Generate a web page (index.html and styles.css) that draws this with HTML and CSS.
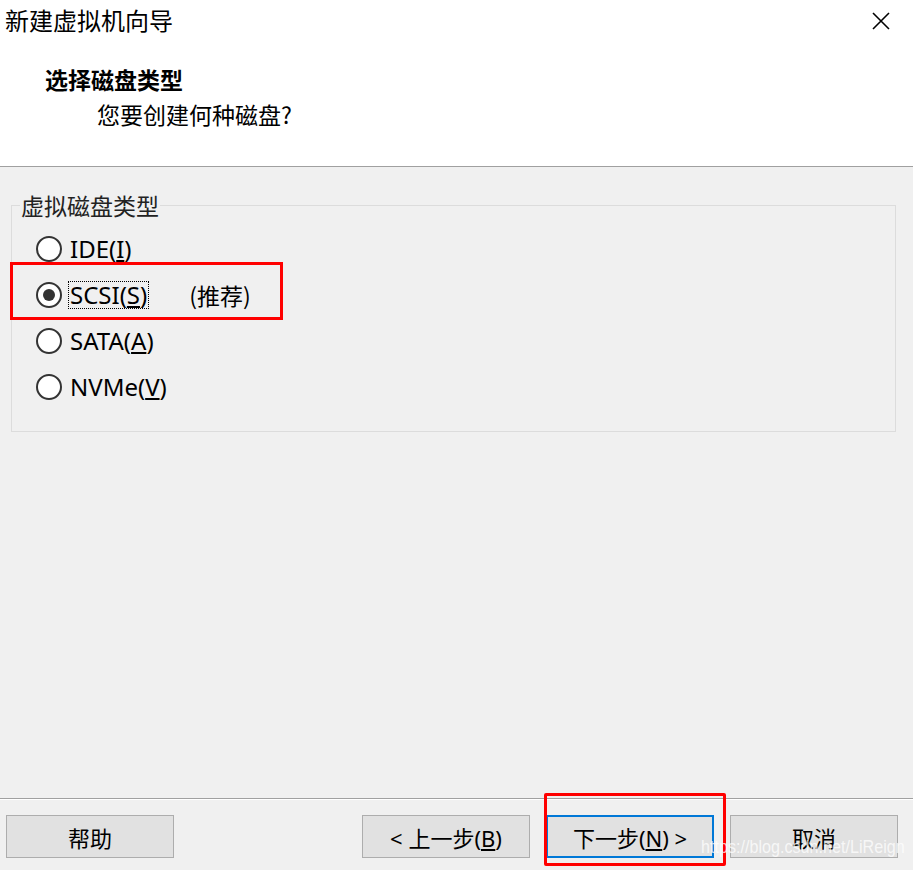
FILE: index.html
```html
<!DOCTYPE html>
<html lang="zh-CN">
<head>
    <meta charset="UTF-8">
    <title>新建虚拟机向导</title>
    <link rel="stylesheet" href="styles.css">
</head>
<body>
    <div class="wizard">
        <!-- Header -->
        <div class="header">
            <div class="title-bar">
                <span class="title">新建虚拟机向导</span>
                <span class="close">
                    <svg width="20" height="20" viewBox="0 0 20 20"><path d="M2 2 L18 18 M18 2 L2 18" stroke="#000" stroke-width="1.6" fill="none"/></svg>
                </span>
            </div>
            <div class="step-title">选择磁盘类型</div>
            <div class="step-desc">您要创建何种磁盘?</div>
        </div>

        <!-- Body -->
        <div class="body">
            <fieldset class="group">
                <legend>虚拟磁盘类型</legend>
                <label class="option"><span class="radio"></span><span class="label">IDE(<u>I</u>)</span></label>
                <label class="option selected"><span class="radio checked"></span><span class="label focus">SCSI(<u>S</u>)</span><span class="hint">(推荐)</span></label>
                <label class="option"><span class="radio"></span><span class="label">SATA(<u>A</u>)</span></label>
                <label class="option"><span class="radio"></span><span class="label">NVMe(<u>V</u>)</span></label>
            </fieldset>
        </div>

        <!-- Footer -->
        <div class="footer">
            <button class="btn">帮助</button>
            <div class="spacer"></div>
            <button class="btn">&lt; 上一步(<u>B</u>)</button>
            <div class="next-wrap">
                <button class="btn primary">下一步(<u>N</u>) &gt;</button>
            </div>
            <button class="btn">取消</button>
            <span class="watermark">https://blog.csdn.net/LiReign</span>
        </div>
    </div>
</body>
</html>
```

FILE: styles.css
```css
/* General */
body {
    margin: 0;
    font-family: "Noto Sans", "Noto Sans CJK SC", sans-serif;
    background: #f0f0f0;
    color: #000;
}

.wizard {
    width: 913px;
    height: 870px;
    display: flex;
    flex-direction: column;
    background: #f0f0f0;
    overflow: hidden;
}

/* Header */
.header {
    background: #fff;
    height: 167px;
    border-bottom: 1px solid #a0a0a0;
    box-sizing: border-box;
    flex-shrink: 0;
}

.title-bar {
    display: flex;
    justify-content: space-between;
    align-items: center;
    height: 40px;
    padding: 0 22px 0 5px;
}

.title {
    font-family: "Noto Sans CJK SC", sans-serif;
    font-size: 24px;
    line-height: 40px;
    margin-top: -1px;
}

.close {
    display: flex;
    margin-top: 1px;
}

.step-title {
    font-family: "Noto Sans CJK SC", sans-serif;
    font-weight: bold;
    font-size: 23px;
    line-height: 30px;
    padding-left: 45px;
    margin-top: 24px;
}

.step-desc {
    font-family: "Noto Sans CJK SC", sans-serif;
    font-size: 23px;
    line-height: 30px;
    padding-left: 97px;
    margin-top: 5px;
}

/* Body */
.body {
    flex: 1;
    padding: 25px 17px 0 11px;
}

.group {
    margin: 0;
    border: 1px solid #dcdcdc;
    padding: 8px 0 0 24px;
    height: 240px;
    box-sizing: border-box;
}

.group legend {
    font-family: "Noto Sans CJK SC", sans-serif;
    font-size: 23px;
    color: #222;
    padding: 0 1px;
    margin-left: -16px;
    line-height: 26px;
}

.option {
    display: flex;
    align-items: center;
    height: 46px;
    font-size: 24px;
}

.radio {
    width: 26px;
    height: 26px;
    border: 2px solid #333;
    border-radius: 50%;
    background: #fff;
    box-sizing: border-box;
    margin-right: 6px;
    position: relative;
    flex-shrink: 0;
}

.radio.checked::after {
    content: "";
    position: absolute;
    left: 5px;
    top: 5px;
    width: 12px;
    height: 12px;
    border-radius: 50%;
    background: #333;
}

.label {
    padding: 0 1px;
    border: 1px solid transparent;
    line-height: 26px;
}

.label.focus {
    border: 1px dotted #000;
}

.hint {
    font-family: "Noto Sans CJK SC", sans-serif;
    font-size: 23px;
    margin-left: 40px;
}

.option.selected {
    margin: -10px 0 -2px -26px;
    padding: 8px 0 0 23px;
    width: 273px;
    height: 58px;
    border: 3px solid #f00;
    box-sizing: border-box;
}

/* Footer */
.footer {
    height: 72px;
    box-sizing: border-box;
    flex-shrink: 0;
    border-top: 1px solid #a0a0a0;
    box-shadow: inset 0 1px 0 #fff;
    display: flex;
    align-items: flex-start;
    gap: 16px;
    padding: 16px 15px 0 6px;
    position: relative;
}

.spacer {
    flex: 1;
}

.btn {
    width: 168px;
    height: 43px;
    background: #e1e1e1;
    border: 1px solid #adadad;
    font-family: "Noto Sans", "Noto Sans CJK SC", sans-serif;
    font-size: 22px;
    color: #000;
    padding: 0;
}

/* annotation box drawn over the next button */
.next-wrap {
    position: relative;
    display: flex;
}

.next-wrap::after {
    content: "";
    position: absolute;
    left: -2px;
    top: -22px;
    width: 182px;
    height: 73px;
    border: 3px solid #f00;
    border-radius: 2px;
    box-sizing: border-box;
    pointer-events: none;
}

.btn.primary {
    border: 2px solid #0078d7;
}

.watermark {
    position: absolute;
    right: 8px;
    top: 37px;
    font-family: "Liberation Sans", sans-serif;
    font-size: 19px;
    color: rgba(255, 255, 255, 0.75);
    transform: scaleX(0.85);
    transform-origin: right center;
    pointer-events: none;
}
```
